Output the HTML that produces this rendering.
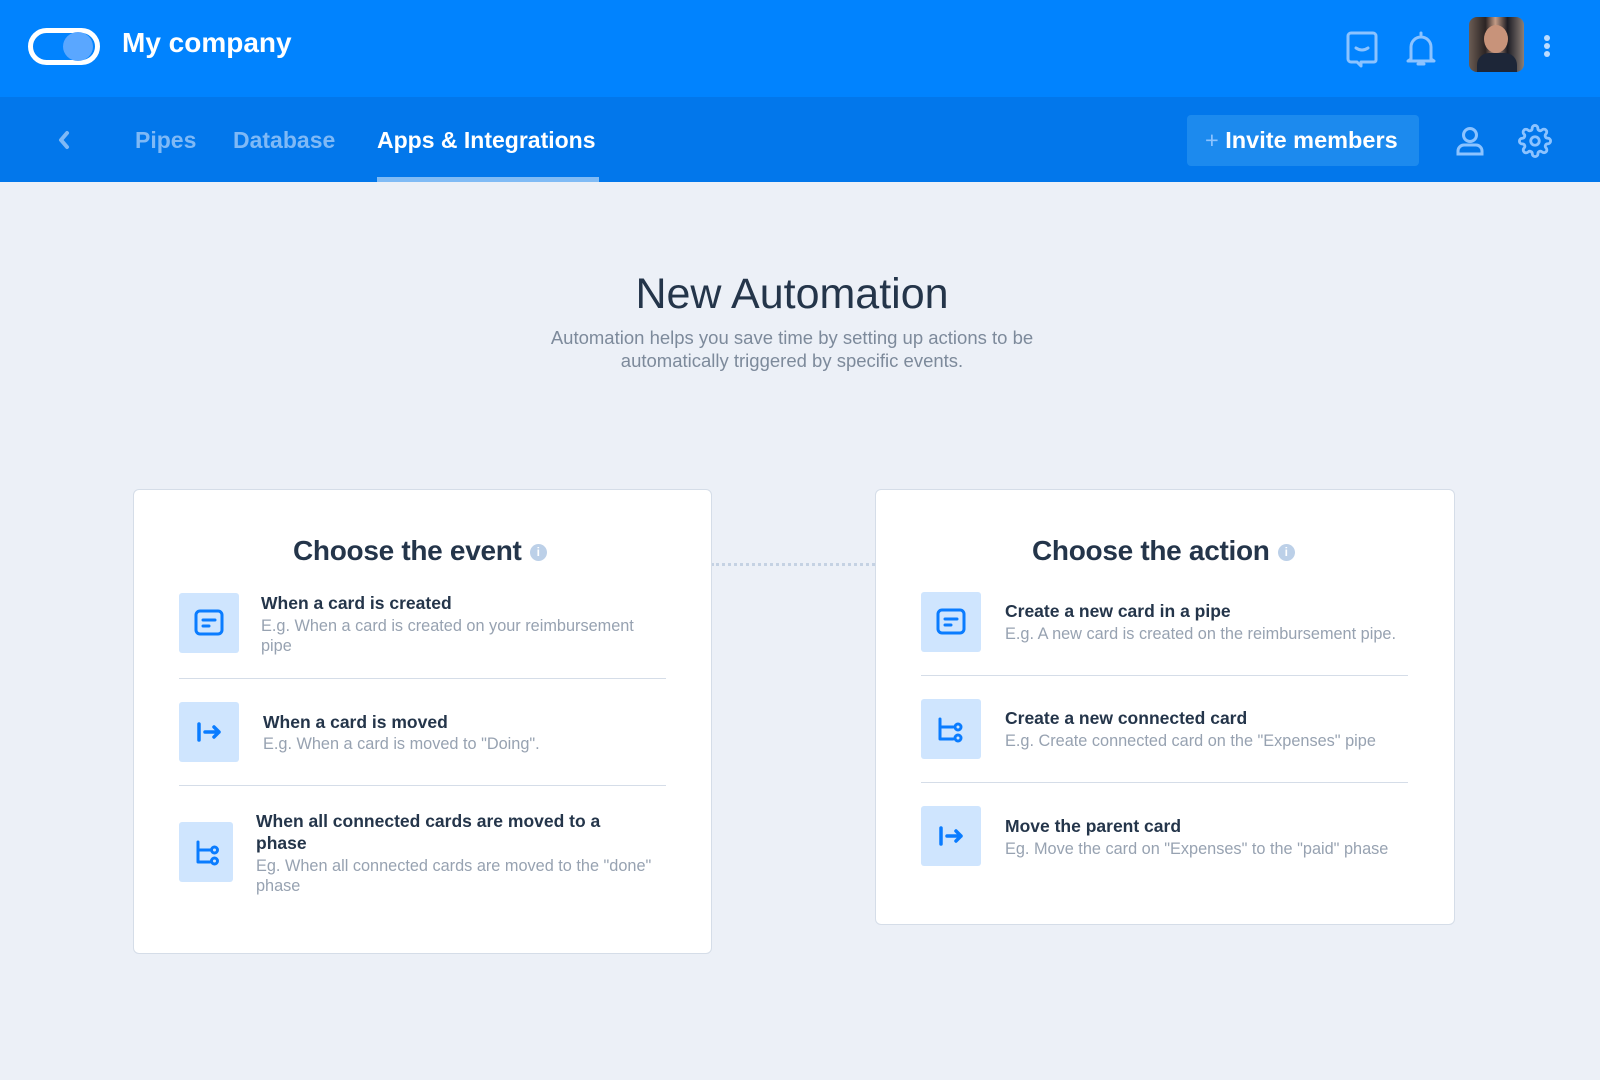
<!DOCTYPE html>
<html><head><meta charset="utf-8">
<style>
*{margin:0;padding:0;box-sizing:border-box}
body{width:1600px;height:1080px;background:#ecf0f7;font-family:"Liberation Sans",sans-serif;position:relative;overflow:hidden;color:#24354a}
.a{position:absolute;white-space:nowrap}
.hdr{position:absolute;left:0;top:0;width:1600px;height:97px;background:#0183fe}
.sub{position:absolute;left:0;top:97px;width:1600px;height:85px;background:#0277eb}
.nav{font-size:23px;font-weight:bold;color:#7fb9f6;top:127px}
.card{position:absolute;background:#fff;border:1px solid #d5dde8;border-radius:6px}
.ib{position:absolute;width:60px;height:60px;background:#cfe5fe;border-radius:3px}
.ib svg{position:absolute;left:14px;top:14px}
.t{position:absolute;font-size:17.5px;font-weight:bold;color:#24354a;white-space:nowrap}
.d{position:absolute;font-size:16.3px;color:#97a2b1;line-height:19.5px}
.sep{position:absolute;height:1px;background:#d5dde8}
.ct{position:absolute;font-size:28px;font-weight:bold;color:#24354a;white-space:nowrap;letter-spacing:-0.3px}
.info{display:inline-block;width:17px;height:17px;border-radius:50%;background:#bcd0e8;color:#fff;font-size:12px;text-align:center;line-height:17px;vertical-align:middle;margin-left:8px;font-weight:bold}
</style></head><body>
<div class="hdr"></div>
<div class="sub"></div>
<div class="a" style="left:28px;top:28px;width:72px;height:37px;border:5px solid #fff;border-radius:19px"></div>
<div class="a" style="left:63px;top:32px;width:30px;height:29px;border-radius:50%;background:#5aa7ff"></div>
<div class="a" style="left:122px;top:27px;font-size:28px;font-weight:bold;color:#fff">My company</div>
<svg class="a" style="left:1345px;top:30px" width="34" height="38" viewBox="0 0 34 38" fill="none" stroke="#8cc3ff" stroke-width="3" stroke-linecap="round" stroke-linejoin="round"><path d="M6 3h22a3 3 0 0 1 3 3v24a2 2 0 0 1-2 2H16v4L12 32H6a3 3 0 0 1-3-3V6a3 3 0 0 1 3-3z"/><path d="M11 18q6 4 12 0"/></svg>
<svg class="a" style="left:1404px;top:30px" width="34" height="38" viewBox="0 0 34 38" fill="none" stroke="#8cc3ff" stroke-width="3" stroke-linecap="round" stroke-linejoin="round"><path d="M17 3v2M7 29V17a10 10 0 0 1 20 0v12l3 2H4z"/><path d="M14 34h6"/></svg>
<div class="a" style="left:1469px;top:17px;width:55px;height:55px;border-radius:8px;background:linear-gradient(90deg,#6b5c53 0%,#2b2424 30%,#c49c86 48%,#1c1c24 70%,#8b7f78 100%);overflow:hidden"><div style="position:absolute;left:15px;top:8px;width:24px;height:28px;border-radius:50%;background:#c8937a"></div><div style="position:absolute;left:8px;top:36px;width:40px;height:25px;border-radius:12px 12px 0 0;background:#1d2638"></div></div>
<div class="a" style="left:1544px;top:35px;width:6px;height:6px;border-radius:3px;background:#bcdcff;box-shadow:0 8px 0 #bcdcff,0 16px 0 #bcdcff"></div>
<svg class="a" style="left:57px;top:129px" width="14" height="22" viewBox="0 0 14 22"><path d="M10 4L4 11l6 7" fill="none" stroke="#7fb9f6" stroke-width="4" stroke-linecap="round" stroke-linejoin="round"/></svg>
<div class="a nav" style="left:135px">Pipes</div>
<div class="a nav" style="left:233px">Database</div>
<div class="a nav" style="left:377px;color:#fff">Apps &amp; Integrations</div>
<div class="a" style="left:377px;top:177px;width:222px;height:5px;background:#80bbf5"></div>
<div class="a" style="left:1187px;top:115px;width:232px;height:51px;border-radius:4px;background:#1c8aee"></div>
<div class="a" style="left:1205px;top:127px;font-size:23.5px;font-weight:bold;color:#fff"><span style="color:#8cc3ff;font-weight:normal">+</span> Invite members</div>
<svg class="a" style="left:1454px;top:125px" width="32" height="32" viewBox="0 0 32 32" fill="none" stroke="#8cc3ff" stroke-width="3" stroke-linecap="round"><circle cx="16" cy="10" r="6.5"/><path d="M4 29v-3a6 6 0 0 1 6-6h12a6 6 0 0 1 6 6v3z"/></svg>
<svg class="a" style="left:1518px;top:124px" width="34" height="34" viewBox="0 0 24 24" fill="none" stroke="#8cc3ff" stroke-width="2" stroke-linejoin="round"><circle cx="12" cy="12" r="3"/><path d="M19.4 15a1.65 1.65 0 0 0 .33 1.82l.06.06a2 2 0 1 1-2.830 2.83l-.06-.06a1.65 1.65 0 0 0-1.82-.33 1.65 1.65 0 0 0-1 1.51V21a2 2 0 1 1-4 0v-.09A1.650 1.65 0 0 0 9 19.4a1.65 1.65 0 0 0-1.82.33l-.06.06a2 2 0 1 1-2.83-2.83l.06-.06a1.65 1.65 0 0 0 .33-1.82 1.65 1.65 0 0 0-1.51-1H3a2 2 0 1 1 0-4h.09A1.65 1.65 0 0 0 4.6 9a1.65 1.65 0 0 0-.33-1.82l-.06-.06a2 2 0 1 1 2.83-2.83l.06.06a1.65 1.65 0 0 0 1.82.33H9a1.65 1.65 0 0 0 1-1.51V3a2 2 0 1 1 4 0v.09a1.65 1.65 0 0 0 1 1.51 1.65 1.65 0 0 0 1.82-.33l.06-.06a2 2 0 1 1 2.83 2.83l-.06.06a1.65 1.65 0 0 0-.33 1.820V9a1.65 1.65 0 0 0 1.51 1H21a2 2 0 1 1 0 4h-.09a1.65 1.65 0 0 0-1.51 1z"/></svg>
<div class="a" style="left:0;width:1584px;text-align:center;top:270px;font-size:43px;color:#24354a">New Automation</div>
<div class="a" style="left:0;width:1584px;text-align:center;top:327px;font-size:18.5px;line-height:22.5px;color:#7d8a9b">Automation helps you save time by setting up actions to be<br>automatically triggered by specific events.</div>
<div class="a" style="left:711px;top:563px;width:164px;border-top:3px dotted #c5d2e3"></div>
<div class="card" style="left:133px;top:489px;width:579px;height:465px"></div>
<div class="ct" style="left:293px;top:535px">Choose the event<span class="info">i</span></div>
<div class="ib" style="left:179px;top:593px"><svg width="32" height="32" viewBox="0 0 32 32" fill="none" stroke="#0a7cff" stroke-width="3" stroke-linecap="round"><rect x="3" y="4" width="26" height="23" rx="4"/><path d="M10 13h12M10 19h6"/></svg></div>
<div class="t" style="left:261px;top:593px">When a card is created</div>
<div class="d" style="left:261px;top:617px;width:395px">E.g. When a card is created on your reimbursement pipe</div>
<div class="sep" style="left:179px;top:678px;width:487px"></div>
<div class="ib" style="left:179px;top:702px"><svg width="32" height="32" viewBox="0 0 32 32" fill="none" stroke="#0a7cff" stroke-width="3.5" stroke-linecap="round" stroke-linejoin="round"><path d="M6 8v16M12 16h14M21 11l5 5-5 5"/></svg></div>
<div class="t" style="left:263px;top:712px">When a card is moved</div>
<div class="d" style="left:263px;top:735px">E.g. When a card is moved to "Doing".</div>
<div class="sep" style="left:179px;top:785px;width:487px"></div>
<div class="ib" style="left:179px;top:822px;width:54px"><svg width="30" height="32" viewBox="0 0 30 32" fill="none" stroke="#0a7cff" stroke-width="3" stroke-linecap="round" stroke-linejoin="round"><path d="M5 6v20h12M5 14h12"/><circle cx="21.5" cy="14" r="3"/><circle cx="21.5" cy="25" r="3"/></svg></div>
<div class="t" style="left:256px;top:810px;line-height:22px;width:380px;white-space:normal">When all connected cards are moved to a phase</div>
<div class="d" style="left:256px;top:857px;width:412px">Eg. When all connected cards are moved to the "done" phase</div>
<div class="card" style="left:875px;top:489px;width:580px;height:436px"></div>
<div class="ct" style="left:1032px;top:535px">Choose the action<span class="info">i</span></div>
<div class="ib" style="left:921px;top:592px"><svg width="32" height="32" viewBox="0 0 32 32" fill="none" stroke="#0a7cff" stroke-width="3" stroke-linecap="round"><rect x="3" y="4" width="26" height="23" rx="4"/><path d="M10 13h12M10 19h6"/></svg></div>
<div class="t" style="left:1005px;top:601px">Create a new card in a pipe</div>
<div class="d" style="left:1005px;top:625px">E.g. A new card is created on the reimbursement pipe.</div>
<div class="sep" style="left:921px;top:675px;width:487px"></div>
<div class="ib" style="left:921px;top:699px"><svg width="32" height="32" viewBox="0 0 32 32" fill="none" stroke="#0a7cff" stroke-width="3" stroke-linecap="round" stroke-linejoin="round"><path d="M5 6v20h13M5 14h13"/><circle cx="23" cy="14" r="3"/><circle cx="23" cy="25" r="3"/></svg></div>
<div class="t" style="left:1005px;top:708px">Create a new connected card</div>
<div class="d" style="left:1005px;top:732px">E.g. Create connected card on the "Expenses" pipe</div>
<div class="sep" style="left:921px;top:782px;width:487px"></div>
<div class="ib" style="left:921px;top:806px"><svg width="32" height="32" viewBox="0 0 32 32" fill="none" stroke="#0a7cff" stroke-width="3.5" stroke-linecap="round" stroke-linejoin="round"><path d="M6 8v16M12 16h14M21 11l5 5-5 5"/></svg></div>
<div class="t" style="left:1005px;top:816px">Move the parent card</div>
<div class="d" style="left:1005px;top:840px">Eg. Move the card on "Expenses" to the "paid" phase</div>
</body></html>
